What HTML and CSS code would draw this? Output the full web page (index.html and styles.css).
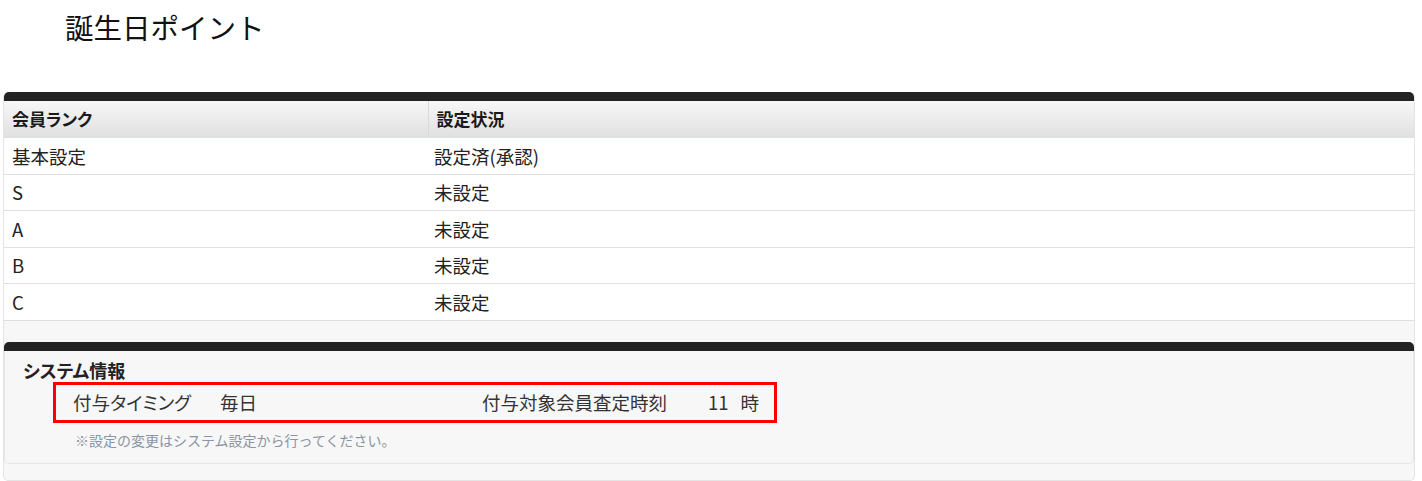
FILE: index.html
```html
<!DOCTYPE html>
<html lang="ja">
<head>
<meta charset="utf-8">
<title>誕生日ポイント</title>
<link rel="stylesheet" href="styles.css">
</head>
<body>
<h1 class="page-title">誕生日ポイント</h1>
<div class="outer">
  <section class="block">
    <div class="bar"></div>
    <table class="rank-table">
      <thead>
        <tr><th class="col1">会員ランク</th><th>設定状況</th></tr>
      </thead>
      <tbody>
        <tr><td class="col1">基本設定</td><td>設定済(承認)</td></tr>
        <tr><td class="col1">S</td><td>未設定</td></tr>
        <tr><td class="col1">A</td><td>未設定</td></tr>
        <tr><td class="col1">B</td><td>未設定</td></tr>
        <tr><td class="col1">C</td><td>未設定</td></tr>
      </tbody>
    </table>
  </section>
  <section class="block sys">
    <div class="bar"></div>
    <div class="sys-body">
      <h2 class="sys-title">システム情報</h2>
      <div class="highlight">
        <span class="lbl1">付与タイミング</span>
        <span class="val1">毎日</span>
        <span class="lbl2">付与対象会員査定時刻</span>
        <span class="val2">11</span><span class="unit">時</span>
      </div>
      <p class="note">※設定の変更はシステム設定から行ってください。</p>
    </div>
  </section>
</div>
</body>
</html>
```

FILE: styles.css
```css
* { box-sizing: border-box; }
html, body { margin: 0; padding: 0; background: #fff; }
body {
  font-family: "Noto Sans CJK JP", "Noto Sans", sans-serif;
  color: #222;
}
.page-title {
  margin: 0;
  padding: 7px 0 0 65px;
  height: 92px;
  font-size: 28.5px;
  line-height: 40px;
  font-weight: normal;
  color: #111;
}
.outer {
  margin: 0 7px 0 3px;
  background: #f7f7f7;
  border: 1px solid #e4e4e4;
  border-top: none;
  border-radius: 5px;
  padding-bottom: 16px;
}
.bar {
  height: 9px;
  background: #232323;
  border-radius: 5px 5px 0 0;
}
.rank-table {
  width: 100%;
  border-collapse: collapse;
  background: #fff;
}
.rank-table th {
  height: 36px;
  text-align: left;
  font-size: 17px;
  font-weight: bold;
  padding: 0 0 0 8px;
  background: linear-gradient(#f7f7f7, #e1e1e1);
  border-bottom: 2px solid #dde1e1;
  font-feature-settings: "palt";
  color: #1a1a1a;
}
.rank-table th.col1 { border-right: 1px solid #d9d9d9; }
.rank-table .col1 { width: 424px; }
.rank-table td {
  height: 37px;
  font-size: 18.5px;
  padding: 0 0 0 8px;
  border-bottom: 1px solid #dde0e0;
}
.rank-table tbody tr:nth-child(even) td { height: 36px; }
.rank-table td:last-child { padding-left: 6px; }
.sys { margin-top: 21px; }
.sys-body {
  border: 1px solid #e6e6e6;
  border-top: none;
  border-radius: 0 0 5px 5px;
  padding: 7px 18px 11px;
}
.sys-title {
  margin: 0;
  font-size: 18px;
  line-height: 24px;
  font-weight: bold;
  color: #222;
  font-feature-settings: "palt";
}
.highlight {
  display: flex;
  align-items: center;
  width: 724px;
  height: 41px;
  margin: 0 0 0 30px;
  border: 3px solid #ff0000;
  padding-left: 17px;
  font-size: 18.5px;
  color: #333;
  font-feature-settings: "palt";
}
.lbl1 { width: 147px; }
.val1 { width: 262px; }
.lbl2 { width: 226px; }
.unit { margin-left: 12px; }
.note {
  margin: 5px 0 0 52px;
  font-size: 14px;
  line-height: 24px;
  color: #8a94a3;
}
```
